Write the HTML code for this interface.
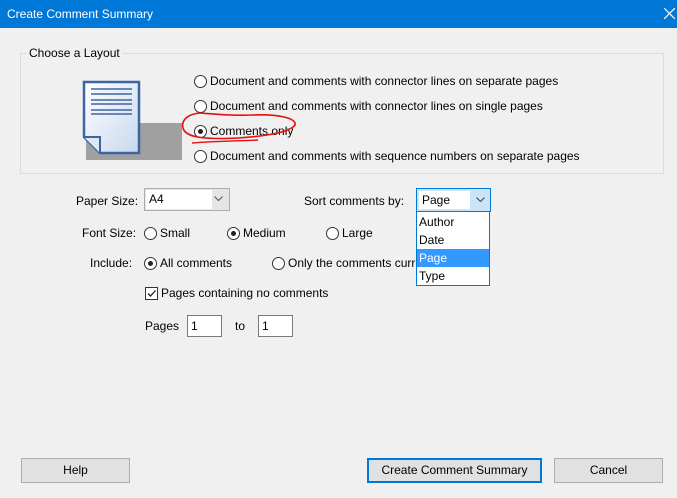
<!DOCTYPE html><html><head><style>
body{margin:0;width:677px;height:498px;background:#f0f0f0;font:12px "Liberation Sans",sans-serif;color:#000;position:relative;overflow:hidden}
.a{position:absolute;white-space:nowrap}
.r{position:absolute;width:11px;height:11px;border:1px solid #333;border-radius:50%;background:#fff}
.r.on::after{content:"";position:absolute;left:3px;top:3px;width:5px;height:5px;border-radius:50%;background:#222}
.btn{position:absolute;top:458px;height:23px;border:1px solid #adadad;background:#e1e1e1;text-align:center;line-height:23px}
.inp{position:absolute;background:#fff;border:1px solid #7a7a7a;height:20px;line-height:20px;padding-left:3px;box-sizing:border-box}
</style></head><body>
<div class="a" style="left:0;top:0;width:677px;height:28px;background:#0078d7"></div>
<div class="a" style="left:7px;top:7px;color:#fff;font-size:12px">Create Comment Summary</div>
<svg class="a" style="left:664px;top:8px" width="11" height="11"><path d="M0 0L11 11M11 0L0 11" stroke="#fff" stroke-width="1.2"/></svg>

<div class="a" style="left:20px;top:53px;width:642px;height:119px;border:1px solid #dcdcdc"></div>
<div class="a" style="left:27px;top:46px;background:#f0f0f0;padding:0 2px">Choose a Layout</div>

<div class="a" style="left:86px;top:123px;width:96px;height:37px;background:#a0a0a0"></div>
<svg class="a" style="left:82px;top:80px" width="60" height="75">
<defs><linearGradient id="g" x1="0" y1="0" x2="1" y2="1"><stop offset="0" stop-color="#fff"/><stop offset="1" stop-color="#c8d8ee"/></linearGradient></defs>
<path d="M2 2H57V73H18L2 57Z" fill="url(#g)" stroke="#3f64a4" stroke-width="2.5"/>
<path d="M2 57H18V73" fill="#dde6f3" stroke="#3f64a4" stroke-width="2"/>
<g stroke="#3f64a4" stroke-width="1.6"><path d="M9 9H50M9 14H50M9 20H50M9 24H50M9 30H50M9 34H50"/></g>
</svg>

<div class="r" style="left:194px;top:75px"></div><div class="a" style="left:210px;top:74px">Document and comments with connector lines on separate pages</div>
<div class="r" style="left:194px;top:100px"></div><div class="a" style="left:210px;top:99px">Document and comments with connector lines on single pages</div>
<div class="r on" style="left:194px;top:125px"></div><div class="a" style="left:210px;top:124px">Comments only</div>
<div class="r" style="left:194px;top:150px"></div><div class="a" style="left:210px;top:149px">Document and comments with sequence numbers on separate pages</div>
<svg class="a" style="left:178px;top:110px" width="125" height="38"><path d="M22 3C10 4 3 10 5 18C7 26 20 30 60 28C90 26 112 22 117 15C119 8 100 4 75 5C55 6 35 4 22 3" fill="none" stroke="#e81010" stroke-width="1.6"/><path d="M14 33C40 31 60 31 80 30" stroke="#e81010" stroke-width="1.4" fill="none"/></svg>

<div class="a" style="left:76px;top:194px">Paper Size:</div>
<div class="a" style="left:144px;top:188px;width:86px;height:23px;border:1px solid #adadad;background:#e5e5e5;box-sizing:border-box"><div class="a" style="left:1px;top:1px;width:63px;height:19px;background:#fff;line-height:19px;padding-left:3px">A4</div><svg class="a" style="left:69px;top:7px" width="9" height="6"><path d="M0.5 0.5L4.5 4.5L8.5 0.5" stroke="#555" fill="none"/></svg></div>
<div class="a" style="left:304px;top:194px">Sort comments by:</div>
<div class="a" style="left:416px;top:188px;width:75px;height:24px;border:1px solid #0078d7;background:#cce4f7;box-sizing:border-box"><div class="a" style="left:2px;top:2px;width:48px;height:18px;background:#fff;line-height:18px;padding-left:3px">Page</div><svg class="a" style="left:59px;top:8px" width="9" height="6"><path d="M0.5 0.5L4.5 4.5L8.5 0.5" stroke="#444" fill="none"/></svg></div>
<div class="a" style="left:416px;top:211px;width:74px;height:75px;border:1px solid #0078d7;background:#fff;box-sizing:border-box">
<div class="a" style="left:2px;top:3px">Author</div><div class="a" style="left:2px;top:21px">Date</div>
<div class="a" style="left:0;top:37px;width:72px;height:18px;background:#3399ff;color:#fff;line-height:18px;padding-left:2px;box-sizing:border-box">Page</div>
<div class="a" style="left:2px;top:57px">Type</div></div>

<div class="a" style="left:82px;top:226px">Font Size:</div>
<div class="r" style="left:144px;top:227px"></div><div class="a" style="left:160px;top:226px">Small</div>
<div class="r on" style="left:227px;top:227px"></div><div class="a" style="left:243px;top:226px">Medium</div>
<div class="r" style="left:326px;top:227px"></div><div class="a" style="left:342px;top:226px">Large</div>

<div class="a" style="left:90px;top:256px">Include:</div>
<div class="r on" style="left:144px;top:257px"></div><div class="a" style="left:160px;top:256px">All comments</div>
<div class="r" style="left:272px;top:257px"></div><div class="a" style="left:288px;top:256px;width:128px;overflow:hidden">Only the comments currently shown</div>

<div class="a" style="left:145px;top:287px;width:11px;height:11px;border:1px solid #333;background:#fff"><svg width="11" height="11" style="position:absolute"><path d="M2 5.5L4.5 8L9.5 2.5" stroke="#222" stroke-width="1.3" fill="none"/></svg></div>
<div class="a" style="left:161px;top:286px">Pages containing no comments</div>

<div class="a" style="left:145px;top:319px">Pages</div>
<div class="inp" style="left:187px;top:315px;width:35px;height:22px">1</div>
<div class="a" style="left:235px;top:319px">to</div>
<div class="inp" style="left:258px;top:315px;width:35px;height:22px">1</div>

<div class="btn" style="left:21px;width:107px">Help</div>
<div class="btn" style="left:367px;width:171px;border:2px solid #0078d7;height:21px;line-height:21px">Create Comment Summary</div>
<div class="btn" style="left:554px;width:107px">Cancel</div>
</body></html>
